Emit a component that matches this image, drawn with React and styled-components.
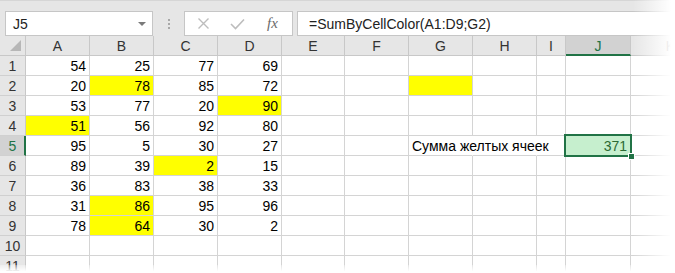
import React from "react";
import styled, { createGlobalStyle } from "styled-components";

const GlobalStyle = createGlobalStyle`
    html, body {
        margin: 0;
        padding: 0;
        background: #ffffff;
        overflow: hidden;
    }
    body {
        font-family: "Liberation Sans", Arial, sans-serif;
    }
`;

const GRID = "#d4d4d4";
const GREEN = "#217346";
const HEAD = "#e6e6e6";

const columns = [
    { name: "A", width: 64 },
    { name: "B", width: 64 },
    { name: "C", width: 64 },
    { name: "D", width: 64 },
    { name: "E", width: 63 },
    { name: "F", width: 64 },
    { name: "G", width: 64 },
    { name: "H", width: 64 },
    { name: "I", width: 29 },
    { name: "J", width: 65 },
    { name: "K", width: 80 },
];

const data = [
    [54, 25, 77, 69],
    [20, 78, 85, 72],
    [53, 77, 20, 90],
    [51, 56, 92, 80],
    [95, 5, 30, 27],
    [89, 39, 2, 15],
    [36, 83, 38, 33],
    [31, 86, 95, 96],
    [78, 64, 30, 2],
];

// which cells are painted yellow: "row:col"
const yellow = new Set(["2:1", "3:3", "4:0", "6:2", "8:1", "9:1", "2:6"]);

const Page = styled.div`
    position: relative;
    width: 675px;
    height: 273px;
    overflow: hidden;
    display: flex;
    flex-direction: column;
`;

const FormulaBar = styled.div`
    height: 46px;
    box-sizing: border-box;
    background: ${HEAD};
    border-top: 1px solid #d6d6d6;
    display: flex;
    align-items: flex-start;
    padding: 10px 0 0 5px;
`;

const NameBox = styled.div`
    width: 148px;
    height: 25px;
    box-sizing: border-box;
    background: #fff;
    border: 1px solid #c6c6c6;
    display: flex;
    align-items: center;
    justify-content: space-between;
    padding: 0 6px 0 7px;
    font-size: 14px;
    color: #222;
`;

const DropArrow = styled.span`
    width: 0;
    height: 0;
    border-left: 4px solid transparent;
    border-right: 4px solid transparent;
    border-top: 4px solid #7a7a7a;
`;

const Grip = styled.div`
    width: 31px;
    height: 25px;
    display: flex;
    flex-direction: column;
    align-items: center;
    justify-content: center;
    gap: 2px;
    span {
        width: 2px;
        height: 2px;
        background: #a8a8a8;
    }
`;

const FxBox = styled.div`
    width: 109px;
    height: 25px;
    box-sizing: border-box;
    background: #fff;
    border: 1px solid #c6c6c6;
    display: flex;
    align-items: center;
    padding-left: 12px;
    gap: 20px;
`;

const FxLabel = styled.span`
    font-family: "Liberation Serif", "Times New Roman", serif;
    font-style: italic;
    font-size: 15px;
    color: #6a6a6a;
    margin-left: 2px;
`;

const FormulaInput = styled.div`
    flex: 1;
    height: 25px;
    box-sizing: border-box;
    margin-left: 4px;
    background: #fff;
    border: 1px solid #c6c6c6;
    border-right: none;
    display: flex;
    align-items: center;
    padding-left: 11px;
    font-size: 14px;
    color: #222;
`;

const Sheet = styled.div`
    display: grid;
    grid-template-columns: 26px ${columns.map((c) => `${c.width}px`).join(" ")};
    grid-auto-rows: 20px;
    font-size: 14px;
`;

const Corner = styled.div`
    position: relative;
    background: ${HEAD};
    border-right: 1px solid #c8c8c8;
    border-bottom: 1px solid #c8c8c8;
    box-sizing: border-box;
    &::after {
        content: "";
        position: absolute;
        right: 4px;
        bottom: 4px;
        width: 0;
        height: 0;
        border-left: 11px solid transparent;
        border-bottom: 11px solid #b7b7b7;
    }
`;

const ColHead = styled.div`
    box-sizing: border-box;
    background: ${(p) => (p.$active ? "#d2d2d2" : HEAD)};
    border-right: 1px solid #c8c8c8;
    border-bottom: ${(p) => (p.$active ? `2px solid ${GREEN}` : "1px solid #c8c8c8")};
    display: flex;
    align-items: center;
    justify-content: center;
    color: ${(p) => (p.$active ? GREEN : "#333")};
    padding-top: ${(p) => (p.$active ? "1px" : "0")};
`;

const RowHead = styled.div`
    box-sizing: border-box;
    background: ${(p) => (p.$active ? "#d2d2d2" : HEAD)};
    border-right: ${(p) => (p.$active ? `2px solid ${GREEN}` : "1px solid #c8c8c8")};
    border-bottom: 1px solid #d0d0d0;
    display: flex;
    align-items: center;
    justify-content: center;
    color: ${(p) => (p.$active ? GREEN : "#333")};
    padding-left: ${(p) => (p.$active ? "1px" : "0")};
`;

const Cell = styled.div`
    position: relative;
    box-sizing: border-box;
    background: ${(p) => p.$fill || "#fff"};
    border-right: 1px solid ${(p) => (p.$noRight ? "transparent" : GRID)};
    border-bottom: 1px solid ${GRID};
    display: flex;
    align-items: center;
    justify-content: ${(p) => (p.$left ? "flex-start" : "flex-end")};
    padding: 0 3px 0 3px;
    color: #000;
    white-space: nowrap;
    overflow: visible;
    z-index: ${(p) => (p.$left ? 1 : 0)};
`;

const Selected = styled(Cell)`
    background: #c6efce;
    color: #2c6a34;
    z-index: 2;
    &::before {
        content: "";
        position: absolute;
        left: -2px;
        top: -2px;
        right: -2px;
        bottom: -2px;
        border: 2px solid ${GREEN};
    }
    &::after {
        content: "";
        position: absolute;
        right: -5px;
        bottom: -5px;
        width: 5px;
        height: 5px;
        background: ${GREEN};
        border: 1px solid #fff;
    }
`;

const FadeRight = styled.div`
    position: absolute;
    top: 0;
    right: 0;
    width: 42px;
    height: 100%;
    background: linear-gradient(to right, rgba(255, 255, 255, 0), #ffffff 90%);
    z-index: 5;
    pointer-events: none;
`;

const FadeBottom = styled.div`
    position: absolute;
    left: 0;
    bottom: 0;
    width: 100%;
    height: 8px;
    background: linear-gradient(to bottom, rgba(255, 255, 255, 0.3), #ffffff 80%);
    z-index: 5;
    pointer-events: none;
`;

const CrossIcon = () => (
    <svg width="13" height="13" viewBox="0 0 13 13">
        <path d="M1.5 1.5 L11.5 11.5 M11.5 1.5 L1.5 11.5" stroke="#bdbdbd" strokeWidth="1.4" fill="none" />
    </svg>
);

const CheckIcon = () => (
    <svg width="15" height="12" viewBox="0 0 15 12">
        <path d="M1 6 L5.5 10.5 L14 1.5" stroke="#bdbdbd" strokeWidth="1.6" fill="none" />
    </svg>
);

const renderRow = (r) => {
    const values = data[r - 1] || [];
    return columns.map((c, ci) => {
        const key = `${r}-${c.name}`;
        if (r === 5 && c.name === "J") {
            return <Selected key={key}>371</Selected>;
        }
        if (r === 5 && c.name === "G") {
            return (
                <Cell key={key} $left $noRight>
                    Сумма желтых ячеек
                </Cell>
            );
        }
        if (r === 5 && c.name === "H") {
            return <Cell key={key} $noRight />;
        }
        const fill = yellow.has(`${r}:${ci}`) ? "#ffff00" : null;
        return (
            <Cell key={key} $fill={fill}>
                {ci < 4 && values[ci] !== undefined ? values[ci] : ""}
            </Cell>
        );
    });
};

const App = () => {
    const rows = Array.from({ length: 11 }, (_, i) => i + 1);
    return (
        <Page>
            <GlobalStyle />
            <FormulaBar>
                <NameBox>
                    J5
                    <DropArrow />
                </NameBox>
                <Grip>
                    <span />
                    <span />
                    <span />
                </Grip>
                <FxBox>
                    <CrossIcon />
                    <CheckIcon />
                    <FxLabel>fx</FxLabel>
                </FxBox>
                <FormulaInput>=SumByCellColor(A1:D9;G2)</FormulaInput>
            </FormulaBar>
            <Sheet>
                <Corner />
                {columns.map((c) => (
                    <ColHead key={c.name} $active={c.name === "J"}>
                        {c.name}
                    </ColHead>
                ))}
                {rows.map((r) => (
                    <React.Fragment key={r}>
                        <RowHead $active={r === 5}>{r}</RowHead>
                        {renderRow(r)}
                    </React.Fragment>
                ))}
            </Sheet>
            <FadeRight />
            <FadeBottom />
        </Page>
    );
};

export default App;
